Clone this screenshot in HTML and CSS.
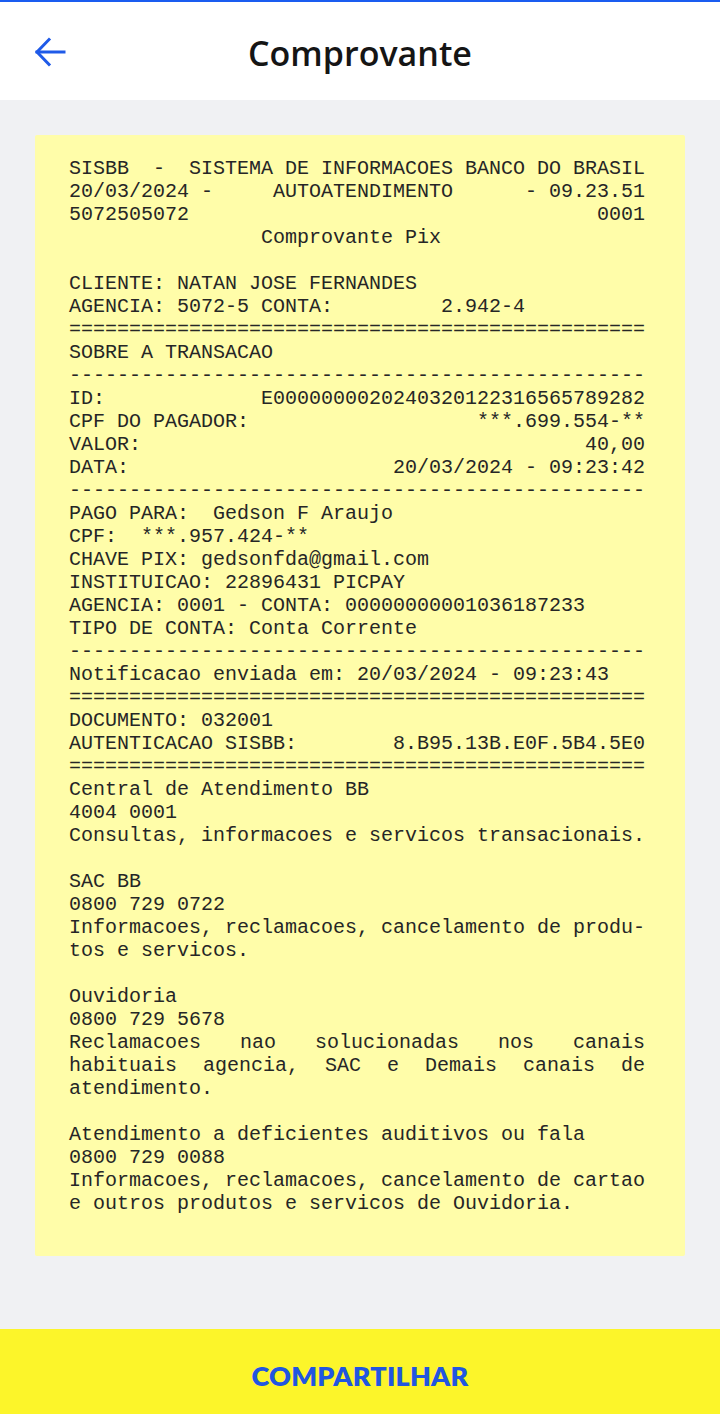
FILE: index.html
```html
<!DOCTYPE html>
<html lang="pt-BR">
<head>
<meta charset="utf-8">
<title>Comprovante</title>
<link rel="stylesheet" href="styles.css">
</head>
<body>
<div class="app">
  <header class="topbar">
    <button class="back" aria-label="Voltar">
      <svg width="32" height="32" viewBox="0 0 32 32" fill="none" stroke="#1f5ae8" stroke-width="3" stroke-linecap="square" stroke-linejoin="miter">
        <path d="M3 16 H30"/>
        <path d="M15 3.5 L3 16 L15 28.5"/>
      </svg>
    </button>
    <h1 class="title">Comprovante</h1>
  </header>
  <main class="content">
    <section class="receipt">
<pre class="mono">SISBB  -  SISTEMA DE INFORMACOES BANCO DO BRASIL
20/03/2024 -     AUTOATENDIMENTO      - 09.23.51
5072505072                                  0001
                Comprovante Pix

CLIENTE: NATAN JOSE FERNANDES
AGENCIA: 5072-5 CONTA:         2.942-4
================================================
SOBRE A TRANSACAO
------------------------------------------------
ID:             E0000000020240320122316565789282
CPF DO PAGADOR:                   ***.699.554-**
VALOR:                                     40,00
DATA:                      20/03/2024 - 09:23:42
------------------------------------------------
PAGO PARA:  Gedson F Araujo
CPF:  ***.957.424-**
CHAVE PIX: gedsonfda@gmail.com
INSTITUICAO: 22896431 PICPAY
AGENCIA: 0001 - CONTA: 00000000001036187233
TIPO DE CONTA: Conta Corrente
------------------------------------------------
Notificacao enviada em: 20/03/2024 - 09:23:43
================================================
DOCUMENTO: 032001
AUTENTICACAO SISBB:        8.B95.13B.E0F.5B4.5E0
================================================
Central de Atendimento BB
4004 0001
Consultas, informacoes e servicos transacionais.

SAC BB
0800 729 0722
Informacoes, reclamacoes, cancelamento de produ-
tos e servicos.

Ouvidoria
0800 729 5678</pre>
<p class="mono justify">Reclamacoes nao solucionadas nos canais habituais agencia, SAC e Demais canais de atendimento.</p>
<pre class="mono gap">Atendimento a deficientes auditivos ou fala
0800 729 0088
Informacoes, reclamacoes, cancelamento de cartao
e outros produtos e servicos de Ouvidoria.</pre>
    </section>
  </main>
  <footer class="actions">
    <button class="share">COMPARTILHAR</button>
  </footer>
</div>
</body>
</html>
```

FILE: styles.css
```css
* { box-sizing: border-box; }
html, body { margin: 0; padding: 0; }
body {
  background: #f0f1f3;
  font-family: "Open Sans", "Noto Sans", sans-serif;
}
.app {
  display: flex;
  flex-direction: column;
  height: 1414px;
}
.topbar {
  height: 100px;
  background: #ffffff;
  border-top: 2px solid #1a5cf0;
  display: flex;
  align-items: center;
  justify-content: center;
  position: relative;
  flex: none;
}
.back {
  position: absolute;
  left: 34px;
  top: 34px;
  width: 32px;
  height: 32px;
  padding: 0;
  border: 0;
  background: none;
  display: flex;
}
.title {
  margin: 0;
  font-size: 34px;
  font-weight: 600;
  color: #151515;
  line-height: 1;
  padding-top: 3px;
}
.content {
  flex: 1;
  padding: 35px 35px 0 35px;
}
.receipt {
  background: #fffda9;
  border-radius: 2px;
  padding: 22px 40px 41px 34px;
  width: 650px;
}
.mono {
  font-family: "Liberation Mono", "Courier New", monospace;
  font-size: 20px;
  line-height: 23px;
  color: #262626;
  margin: 0;
  width: 576px;
}
pre.mono { white-space: pre; }
.gap { margin-top: 23px; }
.justify {
  text-align: justify;
  white-space: normal;
}
.actions {
  height: 85px;
  flex: none;
  background: #fcf52a;
  display: flex;
}
.share {
  flex: 1;
  border: 0;
  background: none;
  font-family: "Lato", "Open Sans", sans-serif;
  font-weight: 800;
  font-size: 27px;
  color: #2156e0;
  letter-spacing: 0.2px;
  padding: 8px 0 0 0;
}
```
